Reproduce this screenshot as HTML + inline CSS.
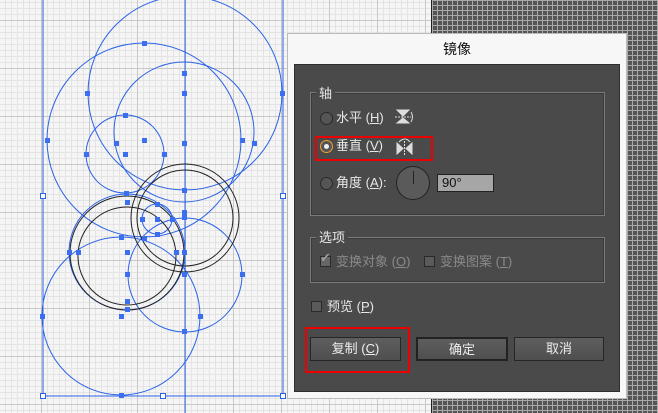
<!DOCTYPE html><html><head><meta charset="utf-8"><style>
*{margin:0;padding:0;box-sizing:border-box}
body{width:658px;height:413px;overflow:hidden;position:relative;font-family:"Liberation Sans","Noto Sans CJK SC",sans-serif;background:#f4f4f4}
.a{position:absolute}
.grid{left:0;top:0;width:431px;height:413px;background-color:#f5f5f5;
background-image:linear-gradient(#c8c8c8 1px,transparent 1px),linear-gradient(90deg,#c8c8c8 1px,transparent 1px),linear-gradient(#e4e4e4 1px,transparent 1px),linear-gradient(90deg,#e4e4e4 1px,transparent 1px);
background-size:48px 48px,48px 48px,6px 6px,6px 6px;background-position:-7px 20px,-7px 20px,-7px 20px,-7px 20px}
.dark{left:431px;top:0;width:227px;height:413px;background-color:#555;border-left:1px solid #222;
background-image:linear-gradient(#aaa 1px,transparent 1px),linear-gradient(90deg,#aaa 1px,transparent 1px);background-size:5px 5px}
.dlg{left:287px;top:33px;width:340px;height:366px;background:#f7f7f7;border:1px solid #bbb}
.in{left:294px;top:64px;width:326px;height:328px;background:#4a4a4a;border:1px solid #2e2e2e}
.t{color:#e8e8e8;font-size:13px;line-height:14px;white-space:nowrap}
.grp{border:1px solid #7a7a7a;box-shadow:inset 0 0 0 1px #3a3a3a}
.lbl{background:#4a4a4a;padding:0 3px}
.rad{width:13px;height:13px;border-radius:50%;border:1px solid #2a2a2a;background:#555}
.btn{height:24px;top:337px;border:1px solid #262626;background:linear-gradient(#5e5e5e,#4f4f4f);color:#eee;font-size:13px;text-align:center;line-height:22px}
.cb{width:11px;height:11px;border:1px solid #2a2a2a;background:#5a5a5a}
u{text-decoration:underline}
</style></head><body>
<div class="a grid"></div>
<svg class="a" style="left:0;top:0" width="431" height="413">
<g fill="none" stroke="#2a62e8" stroke-width="1">
<circle cx="185" cy="93" r="97"/>
<circle cx="144" cy="140" r="97"/>
<circle cx="184" cy="132" r="70"/>
<circle cx="125" cy="154" r="39"/>
<circle cx="157" cy="219" r="15"/>
<circle cx="127" cy="252" r="58"/>
<circle cx="185" cy="275" r="57"/>
<circle cx="121" cy="316" r="79"/>
<line x1="185" y1="0" x2="185" y2="413"/>
<line x1="43" y1="0" x2="43" y2="396"/>
<line x1="283" y1="0" x2="283" y2="396"/>
<line x1="43" y1="396" x2="283" y2="396"/>
</g>
<g fill="none" stroke="#222" stroke-width="1">
<circle cx="185" cy="218" r="54"/><circle cx="185" cy="218" r="48"/>
<circle cx="127" cy="253" r="57"/><circle cx="127" cy="256" r="49"/>
</g>
<g fill="#3b6ff0">
<rect x="142" y="41" width="5" height="5"/><rect x="182" y="71" width="5" height="5"/><rect x="85" y="91" width="5" height="5"/><rect x="182" y="91" width="5" height="5"/><rect x="280" y="91" width="5" height="5"/>
<rect x="45" y="138" width="5" height="5"/><rect x="142" y="138" width="5" height="5"/><rect x="240" y="138" width="5" height="5"/><rect x="252" y="141" width="5" height="5"/><rect x="114" y="141" width="5" height="5"/><rect x="182" y="141" width="5" height="5"/>
<rect x="123" y="113" width="5" height="5"/><rect x="84" y="152" width="5" height="5"/><rect x="162" y="152" width="5" height="5"/><rect x="123" y="152" width="5" height="5"/>
<rect x="182" y="188" width="5" height="5"/><rect x="124" y="191" width="5" height="5"/><rect x="125" y="200" width="5" height="5"/><rect x="155" y="202" width="5" height="5"/><rect x="182" y="210" width="5" height="5"/><rect x="182" y="215" width="5" height="5"/>
<rect x="140" y="217" width="5" height="5"/><rect x="155" y="217" width="5" height="5"/><rect x="170" y="217" width="5" height="5"/><rect x="155" y="232" width="5" height="5"/><rect x="119" y="235" width="5" height="5"/><rect x="142" y="236" width="5" height="5"/>
<rect x="67" y="250" width="5" height="5"/><rect x="76" y="250" width="5" height="5"/><rect x="125" y="250" width="5" height="5"/><rect x="174" y="250" width="5" height="5"/><rect x="182" y="250" width="5" height="5"/>
<rect x="125" y="272" width="5" height="5"/><rect x="182" y="272" width="5" height="5"/><rect x="240" y="272" width="5" height="5"/>
<rect x="125" y="299" width="5" height="5"/><rect x="125" y="307" width="5" height="5"/><rect x="119" y="314" width="5" height="5"/><rect x="40" y="314" width="5" height="5"/><rect x="198" y="314" width="5" height="5"/>
<rect x="182" y="329" width="5" height="5"/><rect x="119" y="393" width="5" height="5"/>
</g>
<g fill="#fff" stroke="#2a62e8"><rect x="40.5" y="193.5" width="5" height="5"/><rect x="280.5" y="193.5" width="5" height="5"/><rect x="40.5" y="393.5" width="5" height="5"/><rect x="160.5" y="393.5" width="5" height="5"/><rect x="280.5" y="393.5" width="5" height="5"/></g>
</svg>
<div class="a dark"></div>
<div class="a dlg"></div>
<div class="a" style="left:287px;top:39px;width:340px;text-align:center;font-size:14px;color:#111">镜像</div>
<div class="a in"></div>
<div class="a grp" style="left:310px;top:92px;width:295px;height:124px"></div>
<div class="a t lbl" style="left:316px;top:87px">轴</div>
<div class="a rad" style="left:320px;top:112px"></div>
<div class="a t" style="left:336px;top:111px">水平 (<u>H</u>)</div>
<svg class="a" style="left:395px;top:109px" width="20" height="16"><g stroke="#ddd" fill="none"><path d="M2 1h12L8 7zM2 14h12L8 9z" fill="#ddd"/><path d="M0 8h16" stroke-dasharray="2 1"/><path d="M16 3q3 5 0 10"/></g></svg>
<div class="a rad" style="left:320px;top:140px;border-color:#f0a030;background:#555"><div class="a" style="left:3px;top:3px;width:5px;height:5px;border-radius:50%;background:#eee"></div></div>
<div class="a t" style="left:336px;top:139px">垂直 (<u>V</u>)</div>
<svg class="a" style="left:396px;top:137px" width="18" height="18"><g stroke="#ddd" fill="#ddd"><path d="M1 6v11l6-5.5zM16 6v11l-6-5.5z"/><path d="M8.5 4v14" stroke-dasharray="2 1" fill="none"/><path d="M3 5q6-6 11 0" fill="none"/></g></svg>
<div class="a" style="left:315px;top:136px;width:118px;height:25px;border:2px solid #e00"></div>
<div class="a rad" style="left:320px;top:177px"></div>
<div class="a t" style="left:336px;top:176px">角度 (<u>A</u>):</div>
<div class="a" style="left:396px;top:166px;width:34px;height:34px;border-radius:50%;background:#5a5a5a;border:1px solid #222"><div class="a" style="left:16px;top:4px;width:1px;height:13px;background:#222"></div></div>
<div class="a" style="left:437px;top:174px;width:57px;height:18px;background:#a6a6a6;border:1px solid #222;font-size:13px;color:#111;padding-left:4px;line-height:16px">90°</div>
<div class="a grp" style="left:310px;top:237px;width:295px;height:46px"></div>
<div class="a t lbl" style="left:316px;top:231px">选项</div>
<div class="a cb" style="left:320px;top:256px;background:#666"></div>
<div class="a" style="left:320px;top:250px;font-size:13px;color:#999">✔</div>
<div class="a t" style="left:336px;top:255px;color:#8a8a8a">变换对象 (<u>O</u>)</div>
<div class="a cb" style="left:424px;top:256px"></div>
<div class="a t" style="left:440px;top:255px;color:#8a8a8a">变换图案 (<u>T</u>)</div>
<div class="a cb" style="left:311px;top:301px"></div>
<div class="a t" style="left:327px;top:300px">预览 (<u>P</u>)</div>
<div class="a btn" style="left:310px;width:91px">复制 (<u>C</u>)</div>
<div class="a btn" style="left:416px;width:92px;border:2px solid #222">确定</div>
<div class="a btn" style="left:514px;width:90px">取消</div>
<div class="a" style="left:305px;top:327px;width:105px;height:46px;border:2px solid #e00"></div>
</body></html>
